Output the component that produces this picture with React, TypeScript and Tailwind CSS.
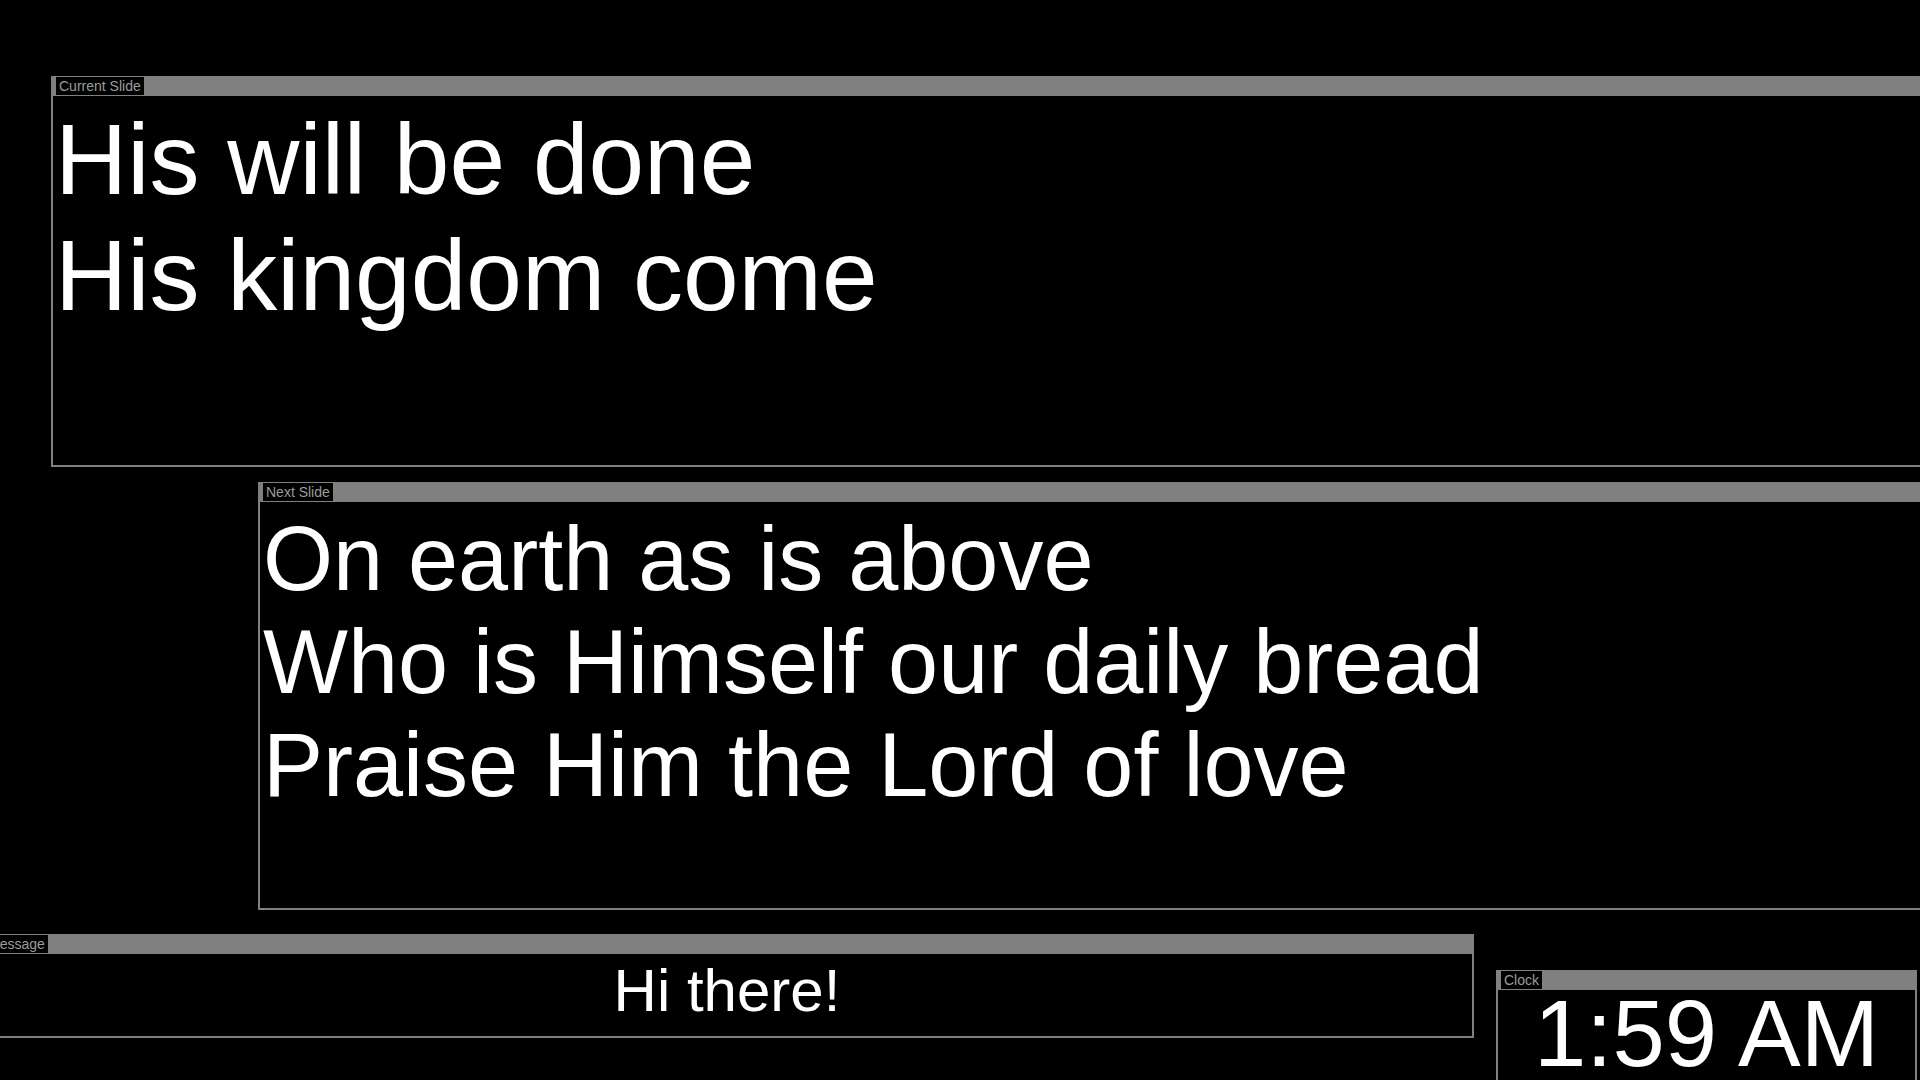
import React from "react";

type PanelProps = {
  label: string;
  className: string;
  children: React.ReactNode;
};

const Panel: React.FC<PanelProps> = ({ label, className, children }) => {
  return (
    <div className={`absolute flex flex-col border-x-2 border-b-2 border-[#808080] bg-black ${className}`}>
      <div className="flex h-[20px] shrink-0 bg-[#808080] pt-[1px] pl-[3px]">
        <span className="h-[18px] bg-black px-[3px] text-[14px] leading-[18px] text-[#9c9c9c] whitespace-nowrap">
          {label}
        </span>
      </div>
      {children}
    </div>
  );
};

const currentLines = ["His will be done", "His kingdom come"];
const nextLines = ["On earth as is above", "Who is Himself our daily bread", "Praise Him the Lord of love"];

const App: React.FC = () => {
  return (
    <div className="relative h-[1080px] w-[1920px] overflow-hidden bg-black font-['Liberation_Sans',Arial,sans-serif] text-white">
      <Panel label="Current Slide" className="left-[51px] top-[76px] h-[391px] w-[1900px]">
        <div className="pl-[2px] pt-[5px] text-[100px] leading-[116px] whitespace-nowrap">
          {currentLines.map((line, i) => (
            <div key={i}>{line}</div>
          ))}
        </div>
      </Panel>

      <Panel label="Next Slide" className="left-[258px] top-[482px] h-[428px] w-[1700px]">
        <div className="pl-[3px] pt-[6px] text-[90px] leading-[103px] whitespace-nowrap">
          {nextLines.map((line, i) => (
            <div key={i}>{line}</div>
          ))}
        </div>
      </Panel>

      <Panel label="Message" className="left-[-20px] top-[934px] h-[104px] w-[1494px]">
        <div className="pt-[2px] text-center text-[60px] leading-[69px]">Hi there!</div>
      </Panel>

      <Panel label="Clock" className="left-[1496px] top-[970px] h-[130px] w-[421px]">
        <div className="overflow-hidden pt-[4px] text-center text-[94px] leading-[80px] whitespace-nowrap">1:59 AM</div>
      </Panel>
    </div>
  );
};

export default App;
